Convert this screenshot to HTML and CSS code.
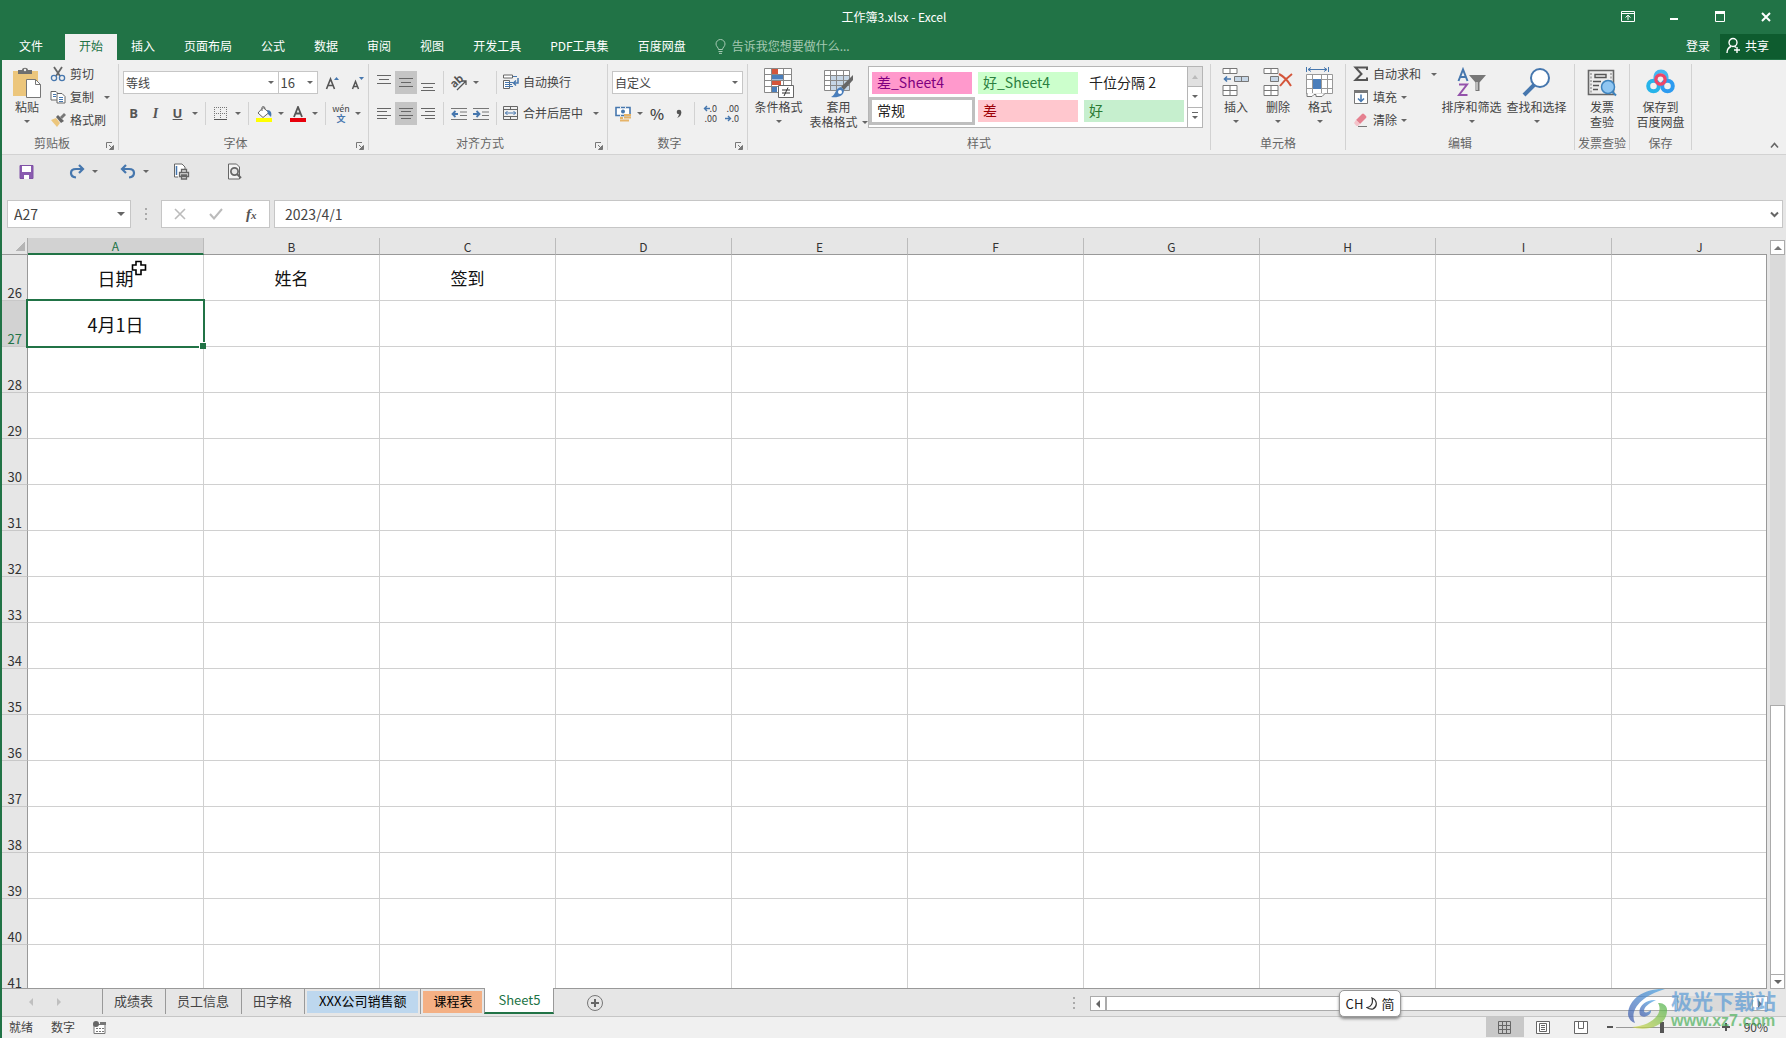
FILE: index.html
```html
<!DOCTYPE html>
<html lang="zh-CN">
<head>
<meta charset="utf-8">
<title>工作簿3.xlsx - Excel</title>
<link rel="stylesheet" href="styles.css">
</head>
<body>
<svg class="defs" aria-hidden="true">
  <symbol id="launch" viewBox="0 0 8 8"><path d="M.5 6V.5H6M3 3l3 3M7.500 3.500v4h-4z" fill="none" stroke="#777"/><path d="M7.500 3.500v4h-4z" fill="#777"/></symbol>
</svg>

<header class="titlebar">
  <span></span>
  <h1 class="title">工作簿3.xlsx - Excel</h1>
  <div class="window-buttons">
    <button aria-label="功能区显示选项"><svg width="14" height="12"><path d="M.5.5h13v10H.5zM.5 2.500h13M7 9V4.500M4.500 6.500L7 4.200l2.500 2.300" fill="none" stroke="#fff"/></svg></button>
    <button aria-label="最小化"><svg width="10" height="12"><path d="M1 8h8" stroke="#fff" stroke-width="2"/></svg></button>
    <button aria-label="最大化"><svg width="10" height="12"><path d="M.5 1h9v9.500h-9z" fill="none" stroke="#fff"/><path d="M0 0h10v3H0z" fill="#fff"/></svg></button>
    <button aria-label="关闭"><svg width="10" height="12"><path d="M1 2l8 8M9 2l-8 8" stroke="#fff" stroke-width="2"/></svg></button>
  </div>
</header>

<nav class="tabs">
  <button class="tab file">文件</button>
  <button class="tab active">开始</button>
  <button class="tab">插入</button>
  <button class="tab">页面布局</button>
  <button class="tab">公式</button>
  <button class="tab">数据</button>
  <button class="tab">审阅</button>
  <button class="tab">视图</button>
  <button class="tab">开发工具</button>
  <button class="tab">PDF工具集</button>
  <button class="tab">百度网盘</button>
  <button class="tell"><svg width="11" height="15"><path d="M3.500 10.500C3.500 8.500 1 7.500 1 5a4.500 4.500 0 0 1 9 0c0 2.500-2.500 3.500-2.500 5.500zM3.500 12.500h4M4 14.400h3" fill="none" stroke="#a5c9b3"/></svg>告诉我您想要做什么...</button>
  <button class="login">登录</button>
  <button class="share"><svg width="15" height="17"><circle cx="7" cy="5.500" r="4" fill="none" stroke="#fff" stroke-width="1.400"/><path d="M1 16c0-3.500 1.500-5.500 4-6.500M8.500 9.300l1.500 1M11 10v6M8 13h6" fill="none" stroke="#fff" stroke-width="1.400"/></svg>共享</button>
</nav>

<section class="ribbon">
  <div class="group g-clipboard">
    <div class="body">
      <button class="big paste"><svg width="30" height="32"><path d="M1 4h25v25H1z" fill="#ecc67c"/><path d="M6 7V3h4c0-3 6-3 6 0h4v4z" fill="#6f6f6f"/><circle cx="13" cy="3" r="1.200" fill="#f0f0f0"/><path d="M14.500 12.500h9l5 5v13h-14z" fill="#fff" stroke="#777"/><path d="M23.500 12.500v5h5" fill="none" stroke="#777"/></svg><span>粘贴</span><i class="caret"></i></button>
      <div class="stack">
        <button class="row"><svg width="16" height="16"><path d="M4 1l6 9M12 1L6 10" stroke="#666" stroke-width="1.800"/><circle cx="4" cy="12" r="2.600" fill="none" stroke="#4677ae" stroke-width="1.300"/><circle cx="12" cy="12" r="2.600" fill="none" stroke="#4677ae" stroke-width="1.300"/></svg>剪切</button>
        <button class="row"><svg width="16" height="16"><path d="M1 2.500h5l2 2V11H1z" fill="#fff" stroke="#666"/><path d="M7 4.500h5l3 3V14H7z" fill="#fff" stroke="#666"/><path d="M3 5.500h3M3 7.500h3M9 8.500h4M9 10.500h4M9 12.500h4" stroke="#4677ae"/></svg>复制<i class="caret far"></i></button>
        <button class="row"><svg width="16" height="16"><path d="M1 8l5-2 4 5-3 4z" fill="#ecc67c"/><path d="M6 5l2-2 6 6-3 2z" fill="#666"/><path d="M10 5l4-4 2 2-4 4z" fill="#777"/></svg>格式刷</button>
      </div>
    </div>
    <div class="label with-launcher">剪贴板<button class="launcher" aria-label="剪贴板设置"><svg width="8" height="8"><use href="#launch"/></svg></button></div>
  </div>

  <div class="group g-font">
    <div class="body lines">
      <div class="line">
        <span class="combo c-font"><select aria-label="字体"><option>等线</option></select></span><span class="combo c-size"><select aria-label="字号"><option>16</option></select></span>
        <button class="ic wide" aria-label="增大字号"><svg width="15" height="16"><path d="M1.500 14L5.500 4 9.500 14M3 10.500h5" fill="none" stroke="#555" stroke-width="1.600"/><path d="M9 5l2.500-3L14 5z" fill="#4677ae"/></svg></button>
        <button class="ic" aria-label="减小字号"><svg width="15" height="16"><path d="M2.500 14L5.500 6.500 8.500 14M3.500 11.500h4" fill="none" stroke="#555" stroke-width="1.500"/><path d="M9 2l2.500 3L14 2z" fill="#4677ae"/></svg></button>
      </div>
      <div class="line">
        <button class="ic fmt"><b>B</b></button><button class="ic fmt serif"><i>I</i></button><button class="ic fmt"><b><u>U</u></b></button><button class="dd" aria-label="下划线样式"><i class="caret"></i></button><span class="sep"></span>
        <button class="ic" aria-label="边框"><svg width="14" height="14"><path d="M.5 0v13M6.500 0v13M12.500 0v13M0 .5h13M0 6.500h13" fill="none" stroke="#777" stroke-dasharray="1 1"/><path d="M0 12.500h13" stroke="#555"/></svg></button><button class="dd" aria-label="边框选项"><i class="caret"></i></button><span class="sep"></span>
        <button class="ic" aria-label="填充颜色"><svg width="17" height="16"><path d="M7 1.500l6 5-6 5-5-4.500z" fill="#fff" stroke="#666"/><path d="M6 5V1.500Q6 .5 7.500.5T9 3" fill="none" stroke="#666"/><path d="M11 4c4 0 5 3 4 7l-3-3z" fill="#4677ae"/><path d="M0 12h16v4H0z" fill="#ff0"/></svg></button><button class="dd" aria-label="填充颜色选项"><i class="caret"></i></button>
        <button class="ic" aria-label="字体颜色"><svg width="16" height="16"><path d="M4 11L8 1l4 10M5.500 7.500h5" fill="none" stroke="#555" stroke-width="1.800"/><path d="M0 12h16v4H0z" fill="#e8000b"/></svg></button><button class="dd" aria-label="字体颜色选项"><i class="caret"></i></button><span class="sep"></span>
        <button class="ic pinyin"><span>wén</span><span class="zh">文</span></button><button class="dd" aria-label="拼音选项"><i class="caret"></i></button>
      </div>
    </div>
    <div class="label with-launcher">字体<button class="launcher" aria-label="字体设置"><svg width="8" height="8"><use href="#launch"/></svg></button></div>
  </div>

  <div class="group g-align">
    <div class="body lines">
      <div class="line">
        <button class="ic" aria-label="顶端对齐"><svg width="14" height="16"><path d="M0 .5h14M2 4.500h10M0 8.500h14" stroke="#666"/></svg></button>
        <button class="ic on" aria-label="垂直居中"><svg width="14" height="16"><path d="M0 3.500h14M2 7.500h10M0 11.500h14" stroke="#666"/></svg></button>
        <button class="ic" aria-label="底端对齐"><svg width="14" height="16"><path d="M0 8.500h14M2 12.500h10M0 15.500h14" stroke="#666"/></svg></button><span class="sep"></span>
        <button class="ic" aria-label="方向"><svg class="spill" width="17" height="16"><text x="0" y="11" transform="rotate(-42 5 8)" font-size="11" font-weight="bold" fill="#555">ab</text><path d="M6 15l9-9M11 6h4v4" fill="none" stroke="#555" stroke-width="1.300"/></svg></button><button class="dd" aria-label="方向选项"><i class="caret"></i></button><span class="fill10"></span><span class="sep"></span>
        <button class="text"><svg width="16" height="16"><path d="M.5 1h9v3h-9zM.5 6.500h6v8h-6z" fill="#fff" stroke="#666"/><path d="M10 2.500h4M2 8.500h8M2 10.500h7M2 12.500h8" stroke="#4677ae"/><path d="M15 4v5h-4M13 6.500L10.500 9l2.500 2.500" fill="none" stroke="#4677ae" stroke-width="1.500"/></svg>自动换行</button>
      </div>
      <div class="line">
        <button class="ic" aria-label="左对齐"><svg width="14" height="12"><path d="M0 .5h14M0 3.500h10M0 7.500h14M0 10.500h10" stroke="#666"/></svg></button>
        <button class="ic on" aria-label="居中"><svg width="14" height="12"><path d="M0 .5h14M2 3.500h10M0 7.500h14M2 10.500h10" stroke="#666"/></svg></button>
        <button class="ic" aria-label="右对齐"><svg width="14" height="12"><path d="M0 .5h14M4 3.500h10M0 7.500h14M4 10.500h10" stroke="#666"/></svg></button><span class="sep"></span>
        <button class="ic" aria-label="减少缩进"><svg width="16" height="14"><path d="M0 1.500h16M9 5h7M9 8.500h7M0 12.500h16" stroke="#777"/><path d="M7 7H2M4.500 4L1.500 7l3 3" fill="none" stroke="#4677ae" stroke-width="1.800"/></svg></button>
        <button class="ic" aria-label="增加缩进"><svg width="16" height="14"><path d="M0 1.500h16M9 5h7M9 8.500h7M0 12.500h16" stroke="#777"/><path d="M0 7h6M3.500 4l3 3-3 3" fill="none" stroke="#4677ae" stroke-width="1.800"/></svg></button><span class="sep"></span>
        <button class="text"><svg width="16" height="16"><path d="M.5 1.500h14v13H.5zM.5 4.500h14M.5 11.500h14M7.500 1v3M7.500 12v3" fill="none" stroke="#666"/><path d="M2 8h11M4.500 6l-2 2 2 2M10.500 6l2 2-2 2" fill="none" stroke="#4677ae"/></svg>合并后居中<i class="caret far"></i></button>
      </div>
    </div>
    <div class="label with-launcher">对齐方式<button class="launcher" aria-label="对齐设置"><svg width="8" height="8"><use href="#launch"/></svg></button></div>
  </div>

  <div class="group g-number">
    <div class="body lines">
      <div class="line"><span class="combo c-num"><select aria-label="数字格式"><option>自定义</option></select></span></div>
      <div class="line">
        <button class="ic" aria-label="会计数字格式"><svg width="17" height="16"><path d="M1 1.500h14v8H1z" fill="#fff" stroke="#4677ae" stroke-width="1.600"/><path d="M5 1.500h1M10 1.500h1M5 9.500h1" stroke="#f0f0f0" stroke-width="2"/><circle cx="8" cy="5.500" r="2" fill="#4677ae"/><path d="M9 9h7M9 11.500h7M5 12h3M5 14.500h9" stroke="#e6b368" stroke-width="2"/></svg></button><button class="dd" aria-label="会计格式选项"><i class="caret"></i></button>
        <button class="ic pct">%</button>
        <button class="ic" aria-label="千位分隔样式"><svg width="7" height="10"><circle cx="3" cy="3" r="2.300" fill="#555"/><path d="M5.300 3C5.500 6 4 8 1 9c1.500-1.500 2-3 2-4z" fill="#555"/></svg></button><span class="sep"></span>
        <button class="ic dec"><span><svg width="7" height="7"><path d="M7 3.500H1.500M4 1L1.500 3.500 4 6" fill="none" stroke="#4677ae" stroke-width="1.400"/></svg>.0</span><span>.00</span></button>
        <button class="ic dec"><span>.00</span><span><svg width="7" height="7"><path d="M0 3.500h5.500M3 1l2.500 2.500L3 6" fill="none" stroke="#4677ae" stroke-width="1.400"/></svg>.0</span></button>
      </div>
    </div>
    <div class="label with-launcher">数字<button class="launcher" aria-label="数字设置"><svg width="8" height="8"><use href="#launch"/></svg></button></div>
  </div>

  <div class="group g-styles">
    <div class="body">
      <button class="big b-cond"><svg width="30" height="32"><path d="M.5 1.500h27v24H.5z" fill="#fff"/><path d="M8 2h6v5H8zM8 13h9v5H8z" fill="#d4553a"/><path d="M8 7.500h11v5H8zM8 19h5v6H8z" fill="#4a7ebb"/><path d="M.5 1.500h27v24H.5zM7.500 1v24M19.500 1v24M.5 7.500h27M.5 13.500h27M.5 19.500h27" fill="none" stroke="#888"/><path d="M14.500 18.500h15v12h-15z" fill="#fff" stroke="#666"/><path d="M18 23h8M18 26h8M24 20.500l-4 8.500" stroke="#333"/></svg><span>条件格式</span><i class="caret"></i></button>
      <button class="big b-table"><svg width="30" height="32"><path d="M.5 3.500h25v20H.5z" fill="#fff"/><path d="M7 8h19v16H7z" fill="#c6d6e6"/><path d="M.5 3.500h25v20H.5zM6.500 3v20M12.500 3v20M19.500 3v20M.5 8.500h25M.5 13.500h25M.5 18.500h25" fill="none" stroke="#888"/><path d="M29 8v5L20 23l-3-3z" fill="#666"/><path d="M17 20l3 3c0 6-6 8-13 7 5-2 4-9 10-10z" fill="#4a7ebb"/><circle cx="16" cy="25" r="2" fill="#fff"/></svg><span>套用</span><span>表格格式<i class="caret"></i></span></button>
      <div class="gallery">
        <div class="swatches">
          <button class="bad4">差_Sheet4</button><button class="good4">好_Sheet4</button><button>千位分隔 2</button>
          <button class="normal">常规</button><button class="bad">差</button><button class="good">好</button>
        </div>
        <div class="gallery-nav"><button class="off" aria-label="上一行"><i class="caret up"></i></button><button aria-label="下一行"><i class="caret"></i></button><button aria-label="其他样式"><i class="caret more"></i></button></div>
      </div>
    </div>
    <div class="label">样式</div>
  </div>

  <div class="group g-cells">
    <div class="body">
      <button class="big"><svg width="28" height="32"><path d="M1 1.500h14v5H1zM8 1v5M1 18.500h14v10H1zM8 18v10M1 23.500h14" fill="#fff" stroke="#777"/><path d="M12.500 9.500h14v5h-14z" fill="#c6d6e6" stroke="#777"/><path d="M19.500 10v5" stroke="#777"/><path d="M9 12H2.500M5 9.500L2.500 12 5 14.500" fill="none" stroke="#4677ae" stroke-width="1.600"/></svg><span>插入</span><i class="caret"></i></button>
      <button class="big"><svg width="30" height="32"><path d="M1 1.500h14v5H1zM8 1v5M1 18.500h14v10H1zM8 18v10M1 23.500h14" fill="#fff" stroke="#777"/><path d="M7.500 9.500h8v5h-8z" fill="#c6d6e6" stroke="#777"/><path d="M16 7c4 2 9 7 12 12M29 7c-4 3-9 8-12 12" fill="none" stroke="#d4553a" stroke-width="2"/></svg><span>删除</span><i class="caret"></i></button>
      <button class="big"><svg width="28" height="32"><path d="M.5 0v5M22.500 0v5M2 2.500h19M5 .5l-3 2 3 2M18 .5l3 2-3 2" fill="none" stroke="#4677ae"/><path d="M.5 7.500h26v19H.5z" fill="#fff"/><path d="M.5 7.500h26v19H.5zM6.500 7v20M15.500 7v20M21.500 7v20M.5 12.500h26M.5 21.500h26" fill="none" stroke="#999"/><path d="M7 12h8v10H7z" fill="#4a7ebb"/><path d="M1 26v3.500h5l2-2h2v2h6l3-3" fill="#fff" stroke="#777"/></svg><span>格式</span><i class="caret"></i></button>
    </div>
    <div class="label">单元格</div>
  </div>

  <div class="group g-edit">
    <div class="body">
      <div class="stack">
        <button class="row"><svg width="16" height="16"><path d="M14 4V1.500H2.500L8.500 8l-6 6H14v-2.500" fill="none" stroke="#555" stroke-width="2"/></svg>自动求和<i class="caret far"></i></button>
        <button class="row"><svg width="16" height="16"><path d="M1.500 1.500h13v13h-13z" fill="#fff" stroke="#777"/><path d="M1 1h14v3H1z" fill="#777"/><path d="M8 5.500v7M5 9.500l3 3 3-3" fill="none" stroke="#4677ae" stroke-width="1.500"/></svg>填充<i class="caret"></i></button>
        <button class="row"><svg width="16" height="16"><path d="M3 8l6-6q1-1 2 0l2 2q1 1 0 2l-6 6z" fill="#e5808f"/><path d="M3 8l4 4-2 2H3.500L1 11z" fill="#f4c3ca"/><path d="M5 14.500h9" stroke="#777"/></svg>清除<i class="caret"></i></button>
      </div>
      <button class="big w65"><svg width="30" height="32"><path d="M1.500 14L6 2.500 10.500 14M3 10h6" fill="none" stroke="#4677ae" stroke-width="2"/><path d="M2 17.500h8L2 28h8.500" fill="none" stroke="#9453ab" stroke-width="2"/><path d="M12 8h17l-6.500 7.500V24l-4 0v-8.500z" fill="#777"/><path d="M20 15v8" stroke="#fff"/></svg><span>排序和筛选</span><i class="caret"></i></button>
      <button class="big w65"><svg width="30" height="32"><path d="M12 18L2 28" stroke="#4677ae" stroke-width="4"/><circle cx="18" cy="11" r="9" fill="#fff" stroke="#4677ae" stroke-width="2"/></svg><span>查找和选择</span><i class="caret"></i></button>
    </div>
    <div class="label">编辑</div>
  </div>

  <div class="group g-inv">
    <div class="body">
      <button class="big w55"><svg width="30" height="32"><path d="M1.500 3.500h25v24h-25z" fill="#ececec" stroke="#666" stroke-width="1.600"/><path d="M4 6v20M24 6v8" stroke="#777" stroke-dasharray="2 1.500"/><path d="M8 7.500h11v3H8z" fill="none" stroke="#555" stroke-width="1.400"/><path d="M6 14.500h8M6 18.500h6M6 22.500h5" stroke="#555" stroke-width="1.400"/><circle cx="21" cy="20" r="6.500" fill="#8fc6f2" stroke="#3e83bd" stroke-width="1.500"/><path d="M25.500 25l3.500 3.500" stroke="#3e83bd" stroke-width="2"/></svg><span>发票</span><span>查验</span></button>
    </div>
    <div class="label">发票查验</div>
  </div>
  <div class="group g-save">
    <div class="body">
      <button class="big w60"><svg width="30" height="32"><circle cx="7.500" cy="19" r="5.300" fill="none" stroke="#26b4ea" stroke-width="4"/><circle cx="21.500" cy="19" r="5.300" fill="none" stroke="#2d9bf0" stroke-width="4"/><path d="M9.500 12C9 6 12 4.500 15 4.500S21 6 20.500 12" fill="none" stroke="#45b7f1" stroke-width="4"/><circle cx="14.500" cy="12.500" r="4.600" fill="none" stroke="#ee4668" stroke-width="3.400"/></svg><span>保存到</span><span>百度网盘</span></button>
    </div>
    <div class="label">保存</div>
  </div>
  <button class="collapse" aria-label="折叠功能区"><svg width="9" height="7"><path d="M1 5.500l3.500-4 3.500 4" fill="none" stroke="#666" stroke-width="1.600"/></svg></button>
</section>

<div class="quick">
  <button aria-label="保存"><svg width="15" height="16"><path d="M1 1.500h13v13H1z" fill="#8a5cb0" stroke="#8052a6"/><path d="M3 2h9v6H3zM5 11h5v4H5z" fill="#fff"/></svg></button>
  <span class="pair p1"><button aria-label="重做"><svg width="16" height="15"><path d="M13 5H7Q2 5 2 9t5 4.500M10 1l4 4-4 4" fill="none" stroke="#4677ae" stroke-width="2.200"/></svg></button><button class="dd" aria-label="重做选项"><i class="caret"></i></button></span>
  <span class="pair p2"><button aria-label="撤消"><svg width="16" height="15"><path d="M3 5h6q5 0 5 4t-5 4.500M6 1L2 5l4 4" fill="none" stroke="#4677ae" stroke-width="2.200"/></svg></button><button class="dd" aria-label="撤消选项"><i class="caret"></i></button></span>
  <button class="p3" aria-label="快速打印"><svg width="17" height="17"><path d="M5 14H1.500V1H9l3 3v2" fill="#fff" stroke="#666"/><path d="M3.500 3v9" stroke="#4677ae" stroke-width="1.500"/><path d="M6.500 9.500h9v4h-9zM8.500 9V6.500h5V9M8.500 12h5v4h-5z" fill="#e6e6e6" stroke="#666" stroke-width="1.300"/></svg></button>
  <button class="p4" aria-label="打印预览"><svg width="16" height="17"><path d="M1.500 1h8l3 3v12h-11z" fill="#f4f4f4" stroke="#666"/><circle cx="7.500" cy="8.500" r="3.600" fill="#e6e6e6" stroke="#666" stroke-width="1.700"/><path d="M10 11l4 4" stroke="#666" stroke-width="2"/></svg></button>
</div>

<div class="formula">
  <div class="namebox"><input type="text" value="A27" aria-label="名称框"><i class="caret"></i></div>
  <span class="dots"></span>
  <div class="fbuttons">
    <button aria-label="取消"><svg width="12" height="12"><path d="M1 1l10 10M11 1L1 11" stroke="#bbb" stroke-width="1.600"/></svg></button>
    <button aria-label="输入"><svg width="14" height="12"><path d="M1 6l4 4.500L13 1" fill="none" stroke="#bbb" stroke-width="2"/></svg></button>
    <button class="fx"><i>f<small>x</small></i></button>
  </div>
  <div class="fbar"><input type="text" value="2023/4/1" aria-label="编辑栏"><button aria-label="展开编辑栏"><svg width="9" height="7"><path d="M1 1.500l3.500 3.500L8 1.500" fill="none" stroke="#666" stroke-width="2"/></svg></button></div>
</div>

<main class="work">
  <div class="sheet">
    <table class="grid">
      <colgroup><col class="rn"><col span="10" class="cl"></colgroup>
      <thead><tr><th class="corner"></th><th class="sel">A</th><th>B</th><th>C</th><th>D</th><th>E</th><th>F</th><th>G</th><th>H</th><th>I</th><th>J</th></tr></thead>
      <tbody>
        <tr><th>26</th><td class="big-text">日期<svg class="cursor" width="16" height="16"><path d="M5 1.500h5V5h4.500v5H10v4.500H5V10H1.500V5H5z" fill="#fff" stroke="#000" stroke-width="1.600"/></svg></td><td>姓名</td><td>签到</td><td></td><td></td><td></td><td></td><td></td><td></td><td></td></tr>
        <tr><th class="sel">27</th><td class="big-text current">4月1日</td><td></td><td></td><td></td><td></td><td></td><td></td><td></td><td></td><td></td></tr>
        <tr><th>28</th><td></td><td></td><td></td><td></td><td></td><td></td><td></td><td></td><td></td><td></td></tr>
        <tr><th>29</th><td></td><td></td><td></td><td></td><td></td><td></td><td></td><td></td><td></td><td></td></tr>
        <tr><th>30</th><td></td><td></td><td></td><td></td><td></td><td></td><td></td><td></td><td></td><td></td></tr>
        <tr><th>31</th><td></td><td></td><td></td><td></td><td></td><td></td><td></td><td></td><td></td><td></td></tr>
        <tr><th>32</th><td></td><td></td><td></td><td></td><td></td><td></td><td></td><td></td><td></td><td></td></tr>
        <tr><th>33</th><td></td><td></td><td></td><td></td><td></td><td></td><td></td><td></td><td></td><td></td></tr>
        <tr><th>34</th><td></td><td></td><td></td><td></td><td></td><td></td><td></td><td></td><td></td><td></td></tr>
        <tr><th>35</th><td></td><td></td><td></td><td></td><td></td><td></td><td></td><td></td><td></td><td></td></tr>
        <tr><th>36</th><td></td><td></td><td></td><td></td><td></td><td></td><td></td><td></td><td></td><td></td></tr>
        <tr><th>37</th><td></td><td></td><td></td><td></td><td></td><td></td><td></td><td></td><td></td><td></td></tr>
        <tr><th>38</th><td></td><td></td><td></td><td></td><td></td><td></td><td></td><td></td><td></td><td></td></tr>
        <tr><th>39</th><td></td><td></td><td></td><td></td><td></td><td></td><td></td><td></td><td></td><td></td></tr>
        <tr><th>40</th><td></td><td></td><td></td><td></td><td></td><td></td><td></td><td></td><td></td><td></td></tr>
        <tr><th>41</th><td></td><td></td><td></td><td></td><td></td><td></td><td></td><td></td><td></td><td></td></tr>
      </tbody>
    </table>
  </div>
  <div class="vscroll"><button aria-label="向上滚动"><i class="caret up"></i></button><span class="before"></span><span class="thumb"></span><button aria-label="向下滚动"><i class="caret"></i></button></div>
</main>

<footer class="sheetbar">
  <div class="arrows"><button aria-label="上一张工作表"><i class="tri left"></i></button><button aria-label="下一张工作表"><i class="tri right"></i></button></div>
  <div class="sheets">
    <button>成绩表</button><button>员工信息</button><button>田字格</button><button class="blue"><span>XXX公司销售额</span></button><button class="orange"><span>课程表</span></button><button class="current-sheet">Sheet5</button>
  </div>
  <button class="add" aria-label="新工作表"><svg width="18" height="18"><circle cx="9" cy="9" r="7.500" fill="none" stroke="#777"/><path d="M5 9h8M9 5v8" stroke="#666" stroke-width="2"/></svg></button>
  <span class="dots"></span>
  <div class="hscroll"><button aria-label="向左滚动"><i class="tri left"></i></button><span class="thumb"></span><span class="after"></span><button aria-label="向右滚动"><i class="tri right"></i></button></div>
  <div class="ime">CH<svg width="12" height="13"><path d="M6 1c5 2 6 8 1 11-2 .5-4 0-6-1.500C5 10 7.500 6 6 1z" fill="none" stroke="#333" stroke-width="1.200"/></svg>简</div>
</footer>

<div class="status">
  <span>就绪</span><span class="num">数字</span>
  <button class="macro" aria-label="录制宏"><svg width="13" height="13"><path d="M1 3.500h11v9H1z" fill="#fff" stroke="#777"/><path d="M7 1h6v3H7z" fill="#777"/><circle cx="3" cy="3" r="3" fill="#666"/><path d="M3 7.500h8M3 10.500h8" stroke="#777" stroke-dasharray="2 1"/></svg></button>
  <div class="views">
    <button class="on" aria-label="普通"><svg width="13" height="13"><path d="M.5.5h12v12H.5zM4.500 0v13M8.500 0v13M0 4.500h13M0 8.500h13" fill="none" stroke="#666"/></svg></button>
    <button aria-label="页面布局"><svg width="14" height="13"><path d="M.5.5h13v12H.5z" fill="#fff" stroke="#666"/><path d="M3.500 2.500h7v8h-7zM5 4.500h4M5 6.500h4M5 8.500h4" fill="none" stroke="#666"/></svg></button>
    <button aria-label="分页预览"><svg width="14" height="13"><path d="M.5.5h13v12H.5z" fill="#fff" stroke="#666"/><path d="M4.500 0v7.500h5V0" fill="none" stroke="#666"/></svg></button>
  </div>
  <button class="zoom-step" aria-label="缩小"><svg width="8" height="10"><path d="M1 5h6" stroke="#555" stroke-width="2"/></svg></button>
  <input class="zoom" type="range" min="0" max="100" value="44" aria-label="缩放">
  <button class="zoom-step" aria-label="放大"><svg width="10" height="10"><path d="M1 5h8M5 1v8" stroke="#555" stroke-width="2"/></svg></button>
  <button class="percent">90%</button>
</div>

<div class="watermark">
  <svg width="42" height="42"><defs><linearGradient id="wb" x1="1" y1="0" x2="0" y2="1"><stop offset="0" stop-color="#4aa8e8"/><stop offset="1" stop-color="#3d55a8"/></linearGradient><linearGradient id="wg" x1="0" y1="1" x2="1" y2="0"><stop offset="0" stop-color="#d9d94a"/><stop offset="1" stop-color="#46b04c"/></linearGradient></defs><path d="M38 1C18 0 2 10 1 26c0 4 3 8 7 9C2 22 14 8 38 1z" fill="url(#wb)"/><path d="M5 39c10 4 36 2 35-18-1-5-5-6-9-6 6 10-6 23-26 24z" fill="url(#wg)"/><path d="M29 12c-10-1-19 7-16 15 4 4 12 0 11-5-3 3-7 3-7 1 0-4 5-8 12-11z" fill="url(#wb)"/></svg>
  <div class="wm-text"><span class="wm-name">极光下载站</span><span class="wm-url">www.xz7.com</span></div>
</div>
</body>
</html>
```
FILE: styles.css
```css
* { box-sizing: border-box; }
html, body { height: 100%; }
body {
  margin: 0;
  display: flex;
  flex-direction: column;
  position: relative;
  min-height: 100vh;
  overflow: hidden;
  border-left: 2px solid #217346;
  background: #e6e6e6;
  color: #444;
  font: 12px/16px "Noto Sans CJK SC", "Noto Sans", sans-serif;
}
button, input, select { font: inherit; color: inherit; }
button {
  display: flex;
  align-items: center;
  justify-content: center;
  padding: 0;
  border: 0;
  background: none;
  white-space: nowrap;
}
input, select { border: 0; outline: 0; background: none; min-width: 0; }
svg { display: block; flex: none; }
.spill { overflow: visible; }
.defs { position: absolute; width: 0; height: 0; }

.caret {
  display: inline-block;
  flex: none;
  border: 3px solid transparent;
  border-top-color: #666;
  border-bottom: 0;
  width: 0;
  height: 0;
}
.caret.up { border-top: 0; border-bottom: 4px solid #777; }
.tri { border: 4px solid transparent; width: 0; height: 0; }
.tri.left { border-right-color: #666; border-left: 0; }
.tri.right { border-left-color: #666; border-right: 0; }
.dots {
  width: 2px;
  height: 12px;
  background: repeating-linear-gradient(#aaa 0 2px, transparent 2px 5px);
}

/* title bar and tabs */
.titlebar {
  display: grid;
  grid-template-columns: 1fr auto 1fr;
  align-items: center;
  height: 34px;
  flex: none;
  background: #217346;
  color: #fff;
}
.title { margin: 0; font-size: 12px; font-weight: 400; }
.window-buttons { display: flex; justify-content: flex-end; }
.window-buttons button { width: 46px; height: 30px; padding-left: 6px; }
.tabs { display: flex; flex: none; height: 26px; background: #217346; color: #fff; }
.tabs button { padding: 0 14px 2px; }
.tabs .tab { margin-right: 1px; }
.tabs .file { padding: 0 17px 2px; margin-right: 5px; }
.tabs .active { background: #f0f0f0; color: #217346; margin-right: 0; }
.tabs .tell { gap: 6px; color: #a5c9b3; }
.tabs .login { margin-left: auto; padding: 0 10px 2px; }
.tabs .share { gap: 4px; padding: 0 17px 2px 6px; height: 25px; background: #0e5c2f; }

/* ribbon */
.ribbon {
  display: flex;
  flex: none;
  padding: 4px 0;
  background: #f0f0f0;
  border-bottom: 1px solid #d2d2d2;
  height: 95px;
}
.group { display: flex; flex-direction: column; border-right: 1px solid #d2d2d2; flex: none; }
.body { display: flex; flex: 1; }
.label { display: flex; align-items: center; justify-content: center; height: 14px; position: relative; color: #666; }
.with-launcher { padding-right: 16px; }
.launcher { position: absolute; right: 4px; bottom: 0; }
.collapse { margin: auto 7px 1px auto; }
.g-clipboard { width: 117px; }
.g-font { width: 250px; }
.g-align { width: 239px; }
.g-number { width: 140px; }
.g-styles { width: 463px; }
.g-cells { width: 135px; }
.g-edit { width: 229px; }
.g-inv { width: 55px; }
.g-save { width: 62px; }
.g-cells .body { padding-left: 4px; }
.g-edit .stack { width: 93px; padding-left: 7px; }

.big { flex-direction: column; justify-content: flex-start; width: 42px; padding-top: 3px; align-self: flex-start; line-height: 15px; }
.big > .caret { margin-top: 6px; }
.big span .caret { margin: 0 0 3px 4px; }
.paste { width: 48px; padding-left: 2px; }
.w55 { width: 54px; }
.w60 { width: 61px; }
.w65 { width: 65px; }
.b-cond { width: 61px; }
.b-table { width: 59px; }
.stack { display: flex; flex-direction: column; }
.row { height: 23px; gap: 4px; padding-bottom: 3px; justify-content: flex-start; }
.caret.far { margin-left: 6px; }

.lines { flex-direction: column; gap: 8px; padding: 7px 0 0 4px; flex: 1; }
.line { display: flex; align-items: center; height: 23px; flex: none; }
.ic { width: 22px; height: 23px; flex: none; }
.ic.wide { width: 28px; }
.ic.on { background: #c5c5c5; }
.dd { width: 12px; height: 23px; flex: none; }
.sep { width: 1px; height: 23px; margin: 0 4px; background: #d2d2d2; flex: none; }
.fill10 { width: 10px; }
.line .fmt { font: 13px/16px "Open Sans", sans-serif; color: #555; padding: 0 1px 2px 0; }
.line .serif { font-family: "Liberation Serif", serif; font-size: 14px; font-weight: bold; padding-bottom: 0; }
.text { gap: 4px; padding: 0 0 1px 2px; }
.pct { font-size: 15px; font-weight: 500; }
.pinyin, .dec { flex-direction: column; font-size: 9px; line-height: 10px; }
.pinyin .zh { color: #4677ae; font-weight: bold; }
.dec { align-items: flex-end; padding-right: 4px; }
.dec span { display: flex; align-items: center; }
.combo { position: relative; display: flex; height: 23px; background: #fff; border: 1px solid #c6c6c6; }
.combo select { appearance: none; flex: 1; padding: 0 2px; }
.combo::after {
  content: "";
  position: absolute;
  right: 4px;
  top: 9px;
  border: 3px solid transparent;
  border-top-color: #666;
  border-bottom: 0;
}
.c-font { width: 158px; }
.c-size { width: 40px; font-size: 13px; border-left: 0; }
.c-num { width: 131px; }

.gallery { display: flex; flex: none; height: 62px; margin-top: 2px; background: #fff; border: 1px solid #b5b5b5; }
.swatches { display: grid; grid-template-columns: repeat(3, 100px); grid-auto-rows: 22px; gap: 6px; padding: 5px 3px; }
.swatches button { justify-content: flex-start; padding: 0 0 2px 5px; font-size: 14px; color: #222; }
.swatches .bad4 { background: #ff99cc; color: #800080; }
.swatches .good4 { background: #ccffcc; color: #2b8040; }
.swatches .bad { background: #ffc7ce; color: #9c0006; }
.swatches .good { background: #c6efce; color: #2b7a33; }
.swatches .normal { outline: 3px solid #bfbfbf; }
.gallery-nav { display: flex; flex-direction: column; width: 15px; border-left: 1px solid #b5b5b5; }
.gallery-nav button { flex: 1; border-bottom: 1px solid #b5b5b5; }
.gallery-nav button:last-child { border-bottom: 0; }
.gallery-nav .off { background: #e1e1e1; }
.gallery-nav .off .caret { border-bottom-color: #bbb; }
.caret.more { position: relative; }
.caret.more::before { content: ""; position: absolute; left: -3px; top: -7px; width: 6px; height: 1px; background: #666; }

/* quick access */
.quick { display: flex; align-items: center; height: 45px; flex: none; padding: 0 0 12px 17px; }
.quick button { height: 20px; }
.pair { display: flex; }
.p1 { margin-left: 35px; }
.p2 { margin-left: 19px; }
.p3 { margin-left: 21px; }
.p4 { margin-left: 37px; }
.pair .dd { margin-left: 4px; }

/* formula bar */
.formula { display: flex; align-items: center; height: 28px; flex: none; padding: 0 3px 0 5px; font-size: 14px; }
.namebox, .fbuttons, .fbar { display: flex; align-items: center; height: 28px; background: #fff; border: 1px solid #c6c6c6; }
.namebox { width: 124px; padding-right: 5px; }
.namebox input { flex: 1; padding: 0 6px 1px; }
.formula .caret { border-left-width: 4px; border-right-width: 4px; border-top-width: 4px; }
.formula .dots { margin: 0 14px; }
.fbuttons { width: 109px; }
.fbuttons button { flex: 1; }
.fbuttons .fx { font: bold 15px/16px "Liberation Serif", serif; color: #555; }
.fx small { font-size: 11px; }
.fbar { flex: 1; margin-left: 4px; padding-right: 3px; }
.fbar input { flex: 1; padding: 0 10px 1px; }

/* worksheet */
.work { display: flex; flex: 1; min-height: 0; padding: 10px 1px 0 0; }
.sheet { flex: 1; min-width: 0; overflow: hidden; border-bottom: 1px solid #999; background: linear-gradient(#e6e6e6, #e6e6e6) 0 0 / 100% 17px no-repeat #fff; position: relative; }
.sheet::after { content: ""; position: absolute; top: 17px; bottom: 0; right: 0; width: 1px; background: #999; }
.grid { table-layout: fixed; width: 0; border-spacing: 0; }
.rn { width: 26px; }
.cl { width: 176px; }
.grid th, .grid td { padding: 0; }
.grid thead th { height: 17px; line-height: 15px; font-weight: 400; color: #333; background: #e6e6e6; border-bottom: 1px solid #999; border-right: 1px solid #bbb; overflow: hidden; }
.grid thead .corner { border-right-color: #ababab; background: linear-gradient(135deg, transparent 50%, #b5b5b5 50%) 14px 4px / 9px 9px no-repeat #e6e6e6; }
.grid thead .sel { background: #d2d2d2; color: #217346; border-bottom: 2px solid #217346; line-height: 14px; }
.grid tbody th { height: 46px; padding-right: 5px; vertical-align: bottom; text-align: right; font-size: 13px; line-height: 14px; font-weight: 400; color: #333; background: #e6e6e6; border-right: 1px solid #999; border-bottom: 1px solid #c8c8c8; }
.grid tbody .sel { background: #d2d2d2; color: #217346; }
.grid td { height: 46px; text-align: center; font-size: 17px; line-height: 24px; color: #111; background: #fff; border-right: 1px solid #d0d0d0; border-bottom: 1px solid #d0d0d0; position: relative; }
.grid .big-text { font-size: 18px; }
.current { z-index: 1; }
.current::before { content: ""; position: absolute; inset: -2px; border: 2px solid #217346; }
.current::after { content: ""; position: absolute; right: -3px; bottom: -3px; width: 6px; height: 6px; background: #217346; border: 1px solid #fff; border-width: 1px 0 0 1px; }
.cursor { position: absolute; left: 103px; top: 5px; }
.vscroll { display: flex; flex-direction: column; width: 15px; margin-left: 3px; padding-top: 2px; }
.vscroll button { height: 15px; background: #fff; border: 1px solid #ababab; flex: none; }
.vscroll .before { flex: 452; background: #dadada; }
.vscroll .thumb { flex: 269; background: #fff; border: 1px solid #ababab; border-bottom: 0; }
.vscroll .caret { border-left-width: 4px; border-right-width: 4px; border-top-width: 4px; }
.vscroll .caret.up { border-top-width: 0; }

/* sheet tabs */
.sheetbar { display: flex; align-items: flex-start; height: 28px; flex: none; position: relative; border-bottom: 1px solid #c6c6c6; }
.arrows { display: flex; width: 100px; height: 26px; padding-left: 15px; }
.arrows button { width: 28px; }
.arrows .tri { opacity: .3; }
.sheets { display: flex; height: 25px; font-size: 13px; }
.sheets button { position: relative; padding: 0 12px 2px 11px; border-left: 1px solid #999; }
.sheets .blue, .sheets .orange { padding: 2px; color: #000; }
.sheets .blue span { background: #bdd7ee; padding: 0 12px 2px; line-height: 20px; }
.sheets .orange span { background: #f4b084; padding: 0 10px 2px; line-height: 20px; }
.sheets .current-sheet { margin-top: -1px; background: #fff; color: #217346; padding: 0 13px; border-right: 1px solid #999; border-bottom: 2px solid #217346; }
.add { margin: 5px auto 0 32px; }
.sheetbar > .dots { margin: 8px 15px 0 0; }
.hscroll { display: flex; width: 38%; height: 15px; margin: 7px 18px 0 0; background: #dadada; }
.hscroll button { width: 16px; background: #fff; border: 1px solid #ababab; }
.hscroll .thumb { flex: 572; background: #fff; border: 1px solid #ababab; }
.hscroll .after { flex: 74; }
.ime { position: absolute; right: 385px; top: 1px; display: flex; align-items: center; justify-content: center; gap: 3px; width: 62px; height: 27px; background: #fff; border: 1px solid #999; border-radius: 5px; box-shadow: 0 2px 3px #888; font-size: 13px; color: #222; }

/* status bar */
.status { display: flex; align-items: center; height: 21px; flex: none; padding: 0 18px 1px 7px; background: #f0f0f0; }
.num { margin-left: 18px; }
.macro { margin-left: 18px; }
.views { display: flex; align-self: stretch; margin-left: auto; margin-right: 4px; }
.views button { width: 38px; }
.views .on { background: #c8c8c8; }
.zoom-step { width: 12px; }
.zoom { appearance: none; width: 104px; height: 12px; margin: 0; background: linear-gradient(#999, #999) 0 50% / 100% 1px no-repeat; }
.zoom::-webkit-slider-thumb { appearance: none; width: 4px; height: 11px; background: #555; }
.percent { margin-left: 12px; }

/* overlay mark */
.watermark { position: absolute; right: 10px; bottom: 8px; display: flex; gap: 2px; opacity: .7; pointer-events: none; }
.wm-text { display: flex; flex-direction: column; font-weight: bold; }
.wm-name { font-size: 21px; line-height: 24px; color: #5b9bd5; }
.wm-url { font: bold 16px/18px "Liberation Sans", sans-serif; color: #4db05c; }
```
